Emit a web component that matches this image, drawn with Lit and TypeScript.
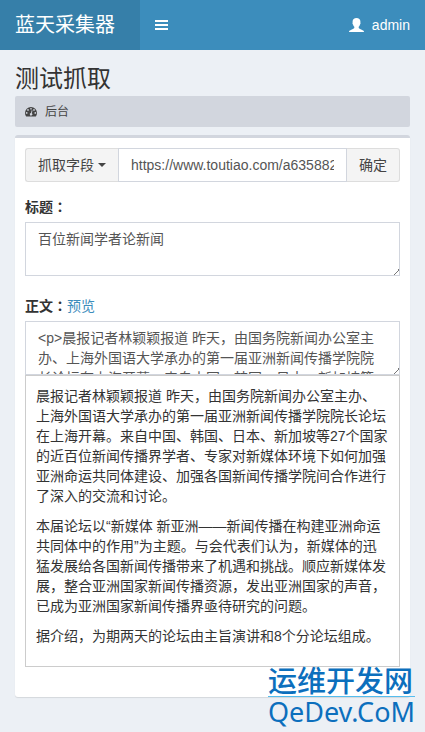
import { LitElement, html, css } from "lit";
import { customElement, state } from "lit/decorators.js";

const PARAGRAPHS = [
  "晨报记者林颖颖报道 昨天，由国务院新闻办公室主办、上海外国语大学承办的第一届亚洲新闻传播学院院长论坛在上海开幕。来自中国、韩国、日本、新加坡等27个国家的近百位新闻传播界学者、专家对新媒体环境下如何加强亚洲命运共同体建设、加强各国新闻传播学院间合作进行了深入的交流和讨论。",
  "本届论坛以“新媒体 新亚洲——新闻传播在构建亚洲命运共同体中的作用”为主题。与会代表们认为，新媒体的迅猛发展给各国新闻传播带来了机遇和挑战。顺应新媒体发展，整合亚洲国家新闻传播资源，发出亚洲国家的声音，已成为亚洲国家新闻传播界亟待研究的问题。",
  "据介绍，为期两天的论坛由主旨演讲和8个分论坛组成。",
];

@customElement("app-root")
export class AppRoot extends LitElement {
  @state() private url = "https://www.toutiao.com/a6358822";
  @state() private heading = "百位新闻学者论新闻";
  @state() private body = PARAGRAPHS.map((p) => `<p>${p}</p>`).join("");
  @state() private previewOpen = true;

  static styles = css`
    :host {
      display: block;
      position: relative;
      min-height: 100vh;
      background: #ecf0f5;
      color: #333;
      font: 14px/20px "Liberation Sans", "Noto Sans CJK SC", sans-serif;
      text-spacing-trim: space-all;
    }
    * { box-sizing: border-box; }
    a { color: #3c8dbc; text-decoration: none; }
    button, input, textarea { font: inherit; margin: 0; }
    svg { display: block; fill: currentColor; }

    .header { display: flex; height: 50px; background: #3c8dbc; color: #fff; }
    .header a { color: #fff; }
    .brand {
      width: 140px;
      padding: 0 15px;
      background: #367fa9;
      font-size: 20px;
      line-height: 50px;
      white-space: nowrap;
    }
    .toggle { padding: 0 15px; border: 0; background: none; color: #fff; }
    .user {
      display: flex;
      align-items: center;
      gap: 8px;
      margin-left: auto;
      padding: 0 15px;
    }

    .content { padding: 15px 15px 34px; }
    h1 { margin: 0 0 3px; font-size: 24px; line-height: 28px; font-weight: 400; }
    .crumbs {
      display: flex;
      align-items: center;
      height: 31px;
      padding: 0 10px;
      border-radius: 2px;
      background: #d2d6de;
      font-size: 12px;
    }
    .crumbs a { display: flex; align-items: center; gap: 8px; color: #444; }

    .box {
      margin-top: 8px;
      padding: 10px 10px 30px;
      border-top: 3px solid #d2d6de;
      border-radius: 3px;
      background: #fff;
      box-shadow: 0 1px 1px rgba(0, 0, 0, 0.1);
    }
    .group { display: flex; height: 34px; margin-bottom: 15px; }
    .btn {
      display: flex;
      align-items: center;
      gap: 4px;
      flex: none;
      padding: 0 12px;
      border: 1px solid #ddd;
      background: #f4f4f4;
      color: #444;
    }
    .first { border-radius: 3px 0 0 3px; border-right: 0; }
    .last { border-radius: 0 3px 3px 0; border-left: 0; }
    .caret {
      border: 4px solid transparent;
      border-top-color: currentColor;
      border-bottom: 0;
    }
    .control {
      display: block;
      width: 100%;
      min-width: 0;
      padding: 6px 12px;
      border: 1px solid #d2d6de;
      border-radius: 0;
      outline: 0;
      background: #fff;
      color: #555;
    }
    .label { display: flex; margin-bottom: 5px; }
    label {
      font-family: "Liberation Sans", "Noto Sans CJK TC", sans-serif;
      font-weight: 700;
    }
    textarea.control { height: 54px; resize: vertical; overflow: hidden; }
    textarea::-webkit-resizer {
      background: linear-gradient(135deg, transparent 80%, #777 80%, #777 86%, transparent 86%);
    }
    .field { margin-bottom: 20px; }
    .field .long { padding-right: 20px; }
    .preview { margin-top: -20px; padding: 10px; border: 1px solid #ccc; }
    .preview p { margin: 0 0 10px; }

    .mark {
      position: absolute;
      right: 10px;
      bottom: 5px;
      color: #0c6fbd;
      font-family: "Noto Sans", "Noto Sans CJK SC", sans-serif;
      line-height: 30px;
      white-space: nowrap;
    }
    .mark-top {
      border-bottom: 1px solid #55bdee;
      font-size: 29px;
      font-weight: 500;
    }
    .mark-bottom { font-size: 27px; }
  `;

  render() {
    return html`
      <header class="header">
        <a class="brand" href="#">蓝天采集器</a>
        <button class="toggle" type="button" aria-label="菜单">
          <svg width="13" height="10" viewBox="0 0 13 10">
            <path d="M0 0h13v2H0zM0 4h13v2H0zM0 8h13v2H0z" />
          </svg>
        </button>
        <a class="user" href="#">
          <svg width="15" height="14" viewBox="0 0 15 14">
            <path d="M7.500 0C9.800 0 11.400 1.300 11.400 3.500c0 .5 0 .8-.1 1.100.5.3.3 1.400-.3 1.800C10.700 7.500 10.200 8.200 9.700 8.700v1.300c.5.8 2.100 1.400 3.500 2 1.200.5 1.800 1 1.800 2H0c0-1 .6-1.500 1.800-2 1.400-.6 3-1.200 3.500-2V8.700C4.800 8.200 4.300 7.500 4 6.400c-.6-.4-.8-1.500-.3-1.800-.1-.3-.1-.6-.1-1.100C3.600 1.300 5.200 0 7.500 0z" />
          </svg>
          <span>admin</span>
        </a>
      </header>
      <main class="content">
        <h1>测试抓取</h1>
        <nav class="crumbs">
          <a href="#">
            <svg width="12" height="10" viewBox="0 0 12 10">
              <path fill-rule="evenodd" d="M6 0a6 6 0 0 1 6 6c0 1.200-.3 2.300-1 3.300-.1.200-.3.300-.5.300h-9c-.2 0-.4-.1-.5-.3C.3 8.300 0 7.200 0 6a6 6 0 0 1 6-6zM1.700 5.100a.85.85 0 1 0 0 1.700.85.85 0 0 0 0-1.700zM3 2.100a.85.85 0 1 0 0 1.700.85.85 0 0 0 0-1.700zM6 .9a.85.85 0 1 0 0 1.700A.85.85 0 0 0 6 .9zM9 2.100a.85.85 0 1 0 0 1.700.85.85 0 0 0 0-1.700zM10.300 5.100a.85.85 0 1 0 0 1.700.85.85 0 0 0 0-1.700zM6.700 3.300 6 6a1.300 1.300 0 1 0 .8.200l.7-2.700z" />
            </svg>
            <span>后台</span>
          </a>
        </nav>
        <section class="box">
          <div class="group">
            <button class="btn first" type="button" aria-haspopup="true">
              抓取字段<span class="caret"></span>
            </button>
            <input class="control" type="text" aria-label="网址" .value=${this.url} />
            <button class="btn last" type="button">确定</button>
          </div>
          <div class="field">
            <div class="label"><label for="title">标题：</label></div>
            <textarea id="title" class="control" .value=${this.heading}></textarea>
          </div>
          <div class="field">
            <div class="label">
              <label for="body">正文：</label>
              <a href="#" @click=${this.togglePreview}>预览</a>
            </div>
            <textarea id="body" class="control long" .value=${this.body}></textarea>
          </div>
          ${this.previewOpen
            ? html`<article class="preview">${PARAGRAPHS.map((p) => html`<p>${p}</p>`)}</article>`
            : null}
        </section>
      </main>
      <div class="mark">
        <div class="mark-top">运维开发网</div>
        <div class="mark-bottom">QeDev.CoM</div>
      </div>
    `;
  }

  private togglePreview(e: Event) {
    e.preventDefault();
    this.previewOpen = !this.previewOpen;
  }
}
